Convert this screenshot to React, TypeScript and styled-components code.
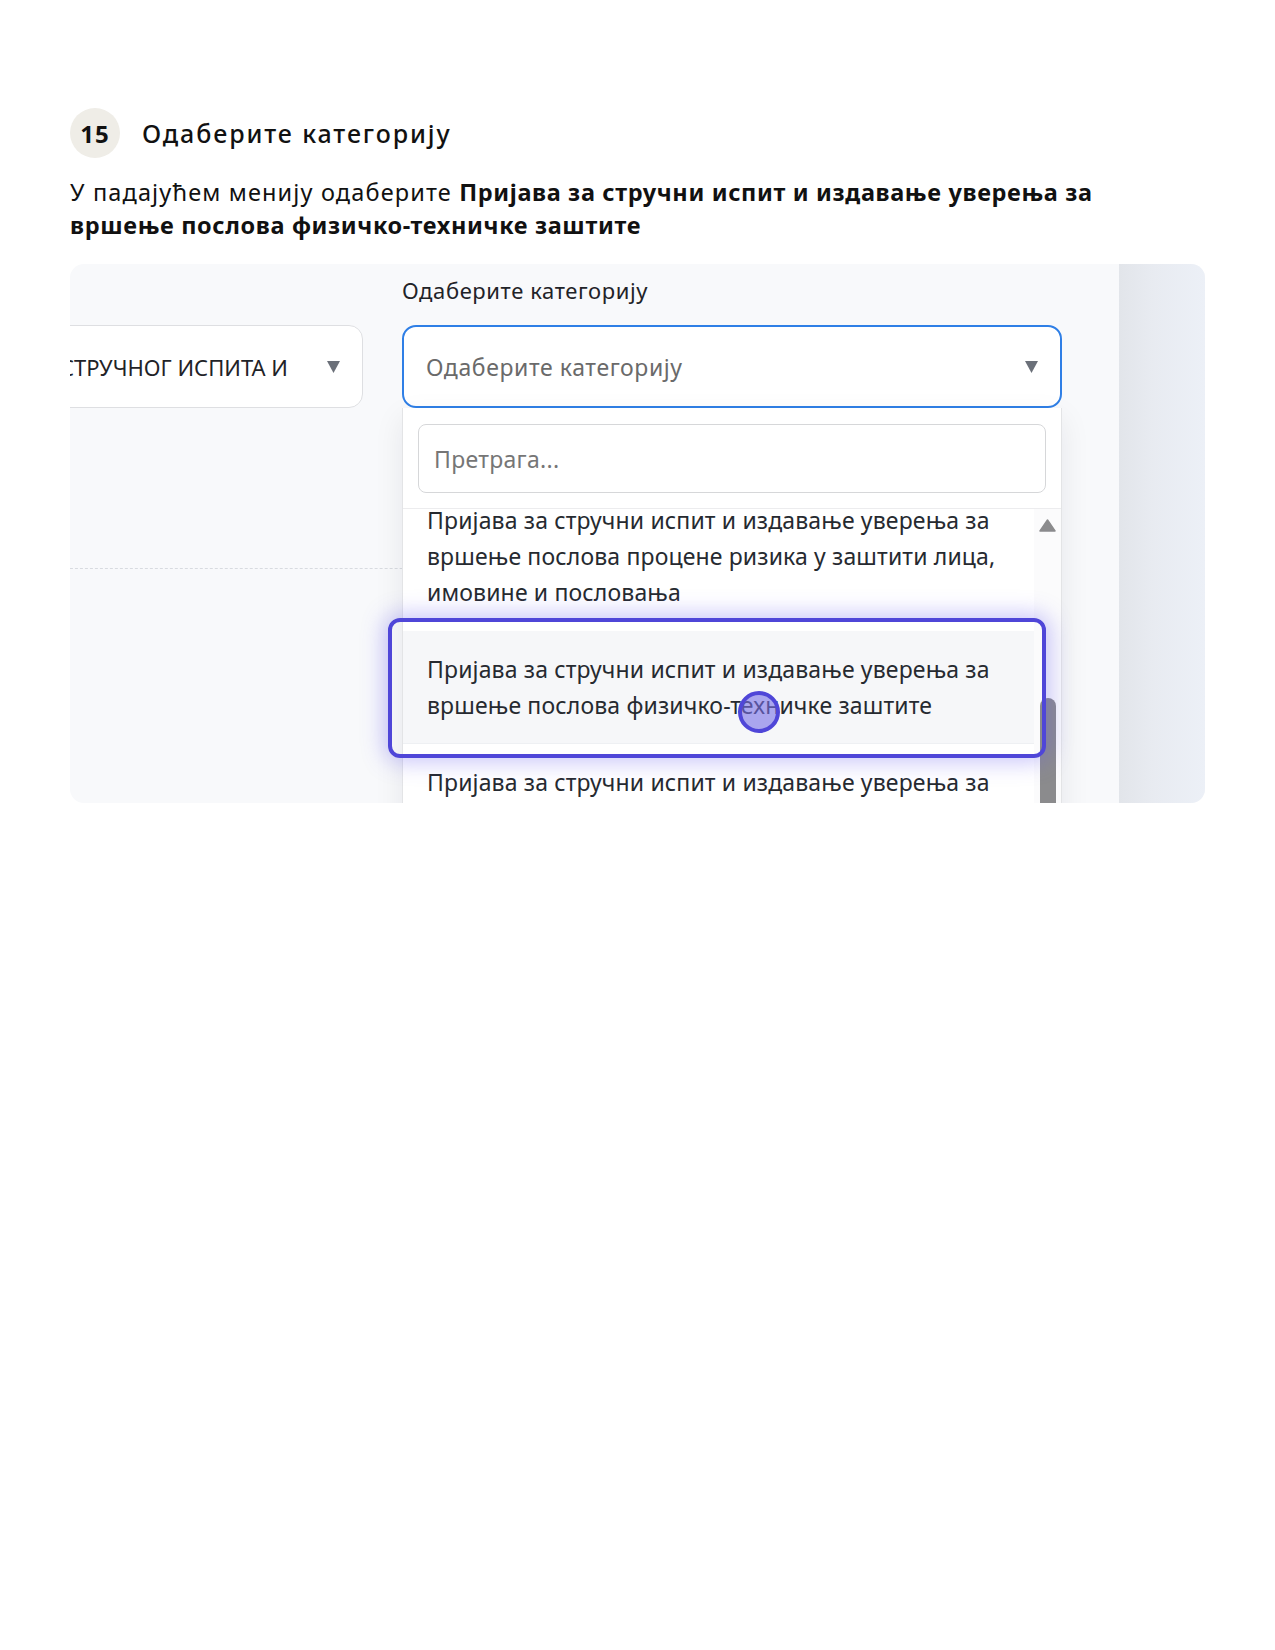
import React from "react";
import styled, { createGlobalStyle } from "styled-components";

const GlobalStyle = createGlobalStyle`
  html, body {
    margin: 0;
    background: #ffffff;
  }
  body {
    font-family: "Noto Sans", "Open Sans", sans-serif;
    color: #111111;
  }
`;

const Page = styled.div`
  padding: 108px 70px 0 70px;
`;

const StepHeader = styled.div`
  display: flex;
  align-items: center;
  gap: 22px;
`;

const StepBadge = styled.div`
  width: 50px;
  height: 50px;
  border-radius: 50%;
  background: #efede7;
  display: flex;
  align-items: center;
  justify-content: center;
  font-size: 24px;
  font-weight: 700;
  letter-spacing: 1px;
  color: #111111;
`;

const StepTitle = styled.h2`
  margin: 0;
  font-size: 25px;
  font-weight: 500;
  letter-spacing: 1.9px;
  color: #111111;
`;

const Lead = styled.p`
  margin: 18px 0 0 0;
  padding-right: 60px;
  font-size: 23.5px;
  line-height: 33px;
  letter-spacing: 1.15px;
  color: #111111;
  b {
    font-weight: 700;
    letter-spacing: 0.65px;
  }
`;

const Card = styled.div`
  position: relative;
  margin-top: 22px;
  height: 539px;
  display: flex;
  border-radius: 14px;
  background: #f8f9fb;
  overflow: hidden;
`;

const FormArea = styled.div`
  flex: 1;
  min-width: 0;
  display: grid;
  grid-template-columns: minmax(0, 1fr) 660px;
  grid-template-rows: auto 83px auto;
  column-gap: 39px;
  align-content: start;
  margin-left: -60px;
  padding: 11px 57px 0 0;
  font-family: "Noto Sans", sans-serif;
`;

const SidePanel = styled.div`
  width: 86px;
  flex-shrink: 0;
  background: linear-gradient(90deg, #e2e5ea 0%, #e8ebf1 40%, #ecf0f7 100%);
`;

const FieldLabel = styled.div`
  grid-column: 2;
  grid-row: 1;
  font-size: 22px;
  line-height: 30px;
  color: #1f2328;
  margin-bottom: 20px;
  letter-spacing: 0.6px;
`;

const LeftSelect = styled.div`
  grid-column: 1;
  grid-row: 2;
  min-width: 0;
  display: flex;
  align-items: center;
  gap: 39px;
  padding-right: 22px;
  background: #ffffff;
  border: 1.5px solid #dedfe2;
  border-radius: 14px;
`;

const LeftSelectText = styled.div`
  flex: 1;
  min-width: 0;
  display: flex;
  justify-content: flex-end;
  overflow: hidden;
  white-space: nowrap;
  font-size: 22px;
  color: #1f2328;
`;

const Caret = styled.svg`
  width: 13px;
  height: 12px;
  flex-shrink: 0;
  fill: #6b7079;
`;

const DashedRule = styled.div`
  grid-column: 1 / -1;
  grid-row: 3;
  margin-top: 160px;
  border-top: 1px dashed #d8dbe0;
`;

const SelectWrap = styled.div`
  grid-column: 2;
  grid-row: 2;
  position: relative;
  z-index: 2;
`;

const MainSelect = styled.div`
  box-sizing: border-box;
  height: 83px;
  display: flex;
  align-items: center;
  justify-content: space-between;
  padding: 0 22px 0 22px;
  background: #ffffff;
  border: 2px solid #2f7fe6;
  border-radius: 14px;
  font-size: 23px;
  color: #6a6a6a;
  letter-spacing: 0.6px;
`;

const Dropdown = styled.div`
  position: absolute;
  top: 100%;
  left: 0;
  right: 0;
  background: #ffffff;
  border: 1px solid #e3e4e6;
  border-top: none;
  box-shadow: 0 10px 28px rgba(15, 23, 42, 0.08);
`;

const SearchBox = styled.div`
  margin: 16px 15px 15px 15px;
  height: 67px;
  display: flex;
  align-items: center;
  padding: 0 15px;
  border: 1.5px solid #d6d7d9;
  border-radius: 8px;
  font-size: 23px;
  color: #767676;
  letter-spacing: 0.3px;
`;

const OptionsViewport = styled.div`
  display: flex;
  height: 320px;
  overflow: hidden;
  border-top: 1px solid #ececee;
`;

const OptionsList = styled.div`
  flex: 1;
  margin-top: -27px;
`;

const Option = styled.div<{ $active?: boolean }>`
  padding: 20px 24px;
  font-size: 23px;
  line-height: 36px;
  color: #262a30;
  letter-spacing: 0.15px;
  background: ${(p) => (p.$active ? "#f6f7f9" : "#ffffff")};
  border-bottom: 1px solid ${(p) => (p.$active ? "#eef0f3" : "transparent")};
`;

const Scrollbar = styled.div`
  width: 27px;
  flex-shrink: 0;
  display: flex;
  flex-direction: column;
  align-items: center;
  padding-top: 10px;
  background: #fbfbfc;
`;

const ScrollThumb = styled.div`
  width: 16px;
  flex: 1;
  margin-top: 166px;
  border-radius: 8px 8px 0 0;
  background: #8b8b8d;
`;

const Highlight = styled.div`
  position: absolute;
  left: 318px;
  top: 354px;
  width: 658px;
  height: 140px;
  box-sizing: border-box;
  border: 4px solid #4f46d8;
  border-radius: 12px;
  box-shadow: 0 0 22px 4px rgba(99, 90, 240, 0.35);
  z-index: 3;
  pointer-events: none;
`;

const Cursor = styled.div`
  position: absolute;
  left: 668px;
  top: 427px;
  width: 42px;
  height: 42px;
  box-sizing: border-box;
  border-radius: 50%;
  border: 4px solid #4f46d8;
  background: rgba(120, 112, 230, 0.6);
  z-index: 4;
`;

function DownCaret() {
  return (
    <Caret viewBox="0 0 13 12">
      <path d="M0 0 H13 L6.5 12 Z" />
    </Caret>
  );
}

const options = [
  "Пријава за стручни испит и издавање уверења за вршење послова процене ризика у заштити лица, имовине и пословања",
  "Пријава за стручни испит и издавање уверења за вршење послова физичко-техничке заштите",
  "Пријава за стручни испит и издавање уверења за вршење послова техничке заштите",
];

export default function App() {
  return (
    <>
      <GlobalStyle />
      <Page>
        <StepHeader>
          <StepBadge>15</StepBadge>
          <StepTitle>Одаберите категорију</StepTitle>
        </StepHeader>
        <Lead>
          У падајућем менију одаберите{" "}
          <b>Пријава за стручни испит и издавање уверења за вршење послова физичко-техничке заштите</b>
        </Lead>
        <Card>
          <FormArea>
            <FieldLabel>Одаберите категорију</FieldLabel>
            <LeftSelect>
              <LeftSelectText>
                <span>ПРИЈАВА СТРУЧНОГ ИСПИТА И</span>
              </LeftSelectText>
              <DownCaret />
            </LeftSelect>
            <SelectWrap>
              <MainSelect>
                <span>Одаберите категорију</span>
                <DownCaret />
              </MainSelect>
              <Dropdown>
                <SearchBox>Претрага...</SearchBox>
                <OptionsViewport>
                  <OptionsList>
                    {options.map((o, i) => (
                      <Option key={i} $active={i === 1}>
                        {o}
                      </Option>
                    ))}
                  </OptionsList>
                  <Scrollbar>
                    <svg width="17" height="13" viewBox="0 0 17 13">
                      <path d="M8.5 1 L16 12 H1 Z" fill="#8b8b8d" stroke="#8b8b8d" strokeWidth="1.5" strokeLinejoin="round" />
                    </svg>
                    <ScrollThumb />
                  </Scrollbar>
                </OptionsViewport>
              </Dropdown>
            </SelectWrap>
            <DashedRule />
          </FormArea>
          <SidePanel />
          <Highlight />
          <Cursor />
        </Card>
      </Page>
    </>
  );
}
